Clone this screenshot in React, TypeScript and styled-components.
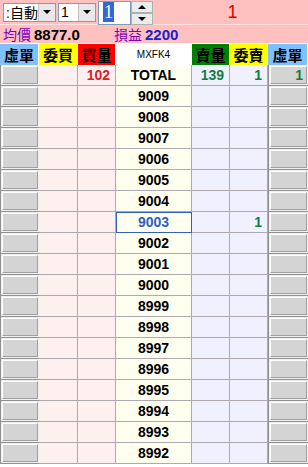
import React from 'react';
import styled, { createGlobalStyle } from 'styled-components';

const GlobalStyle = createGlobalStyle`
  html, body {
    margin: 0;
    padding: 0;
    background: #ffffff;
  }
  body {
    font-family: Arial, "Liberation Sans", "Noto Sans CJK TC", sans-serif;
  }
`;

const Page = styled.div`
  width: 308px;
  height: 467px;
  overflow: hidden;
  background: #ffffff;
`;

const TopBar = styled.div`
  display: flex;
  align-items: center;
  height: 25px;
  background: #ffc0c0;
  border-bottom: 1px solid #ffe0e0;
  box-sizing: border-box;
  padding-left: 3px;
  gap: 2px;
`;

const Combo = styled.div<{ $w: number }>`
  display: flex;
  align-items: center;
  width: ${p => p.$w}px;
  height: 19px;
  box-sizing: border-box;
  background: #ffffff;
  border: 1px solid #7f9db9;
  font-size: 14px;
  color: #000;
`;

const ComboText = styled.span`
  flex: 1;
  padding-left: 2px;
  font-family: "Liberation Sans", "Noto Sans CJK TC", sans-serif;
`;

const ComboButton = styled.div`
  width: 16px;
  height: 17px;
  background: #e8e8e8;
  border-left: 1px solid #c0c0c0;
  display: flex;
  align-items: center;
  justify-content: center;
`;

const Tri = styled.div<{ $up?: boolean }>`
  width: 0;
  height: 0;
  border-left: 4px solid transparent;
  border-right: 4px solid transparent;
  ${p => (p.$up ? 'border-bottom: 4px solid #000;' : 'border-top: 4px solid #000;')}
`;

const Spin = styled.div`
  display: flex;
  height: 24px;
  margin-top: 1px;
  align-self: flex-start;
`;

const SpinInput = styled.div`
  width: 33px;
  height: 24px;
  box-sizing: border-box;
  background: #fff;
  border: 1px solid #7f9db9;
  padding: 2px 0 0 4px;
`;

const SpinSel = styled.span`
  background: #3168d5;
  color: #fff;
  font-family: "Liberation Serif", serif;
  font-size: 18px;
  line-height: 17px;
  padding: 0 1px;
`;

const SpinButtons = styled.div`
  display: flex;
  flex-direction: column;
  width: 22px;
  height: 24px;
`;

const SpinBtn = styled.div`
  flex: 1;
  display: flex;
  align-items: center;
  justify-content: center;
  background: #ececec;
  border: 1px solid #b0b0b0;
  box-sizing: border-box;
`;

const BigNum = styled.div`
  flex: 1;
  text-align: center;
  color: #e00000;
  font-size: 18px;
  padding-left: 2px;
`;

const InfoBar = styled.div`
  display: flex;
  align-items: center;
  height: 18px;
  background: #ffc0c0;
  padding-left: 3px;
`;

const Label = styled.span`
  color: #8000c0;
  font-family: "Noto Sans CJK TC", sans-serif;
  font-size: 14px;
  margin-right: 3px;
`;

const Value = styled.span<{ $color: string; $w?: number }>`
  color: ${p => p.$color};
  font-weight: bold;
  font-size: 15px;
  width: ${p => (p.$w ? `${p.$w}px` : 'auto')};
`;

const Grid = styled.div`
  display: grid;
  grid-template-columns: 39px 39px 38px 76px 38px 38px 40px;
  grid-auto-rows: 21px;
  margin-top: 1px;
`;

const Head = styled.div<{ $bg: string; $small?: boolean }>`
  background: ${p => p.$bg};
  color: #000;
  border-right: 1px solid #ffffff;
  display: flex;
  align-items: center;
  justify-content: center;
  font-family: "Noto Sans CJK TC", sans-serif;
  font-weight: bold;
  font-size: 15px;
  ${p => p.$small && 'font-family: Arial, "Liberation Sans", sans-serif; font-weight: normal; font-size: 10px;'}
`;

const Cell = styled.div<{ $bg: string; $fg?: string }>`
  background: ${p => p.$bg};
  color: ${p => p.$fg || '#000'};
  border-right: 1px solid #b0a8b0;
  border-bottom: 1px solid #b0a8b0;
  box-sizing: border-box;
  display: flex;
  align-items: center;
  justify-content: flex-end;
  padding-right: 5px;
  font-weight: bold;
  font-size: 14px;
`;

const PriceCell = styled.div<{ $hi?: boolean }>`
  background: #fffff0;
  color: ${p => (p.$hi ? '#3060c0' : '#000')};
  border-right: 1px solid #b0a8b0;
  border-bottom: 1px solid #b0a8b0;
  ${p => p.$hi && 'outline: 1px solid #3060c0; outline-offset: -1px;'}
  box-sizing: border-box;
  display: flex;
  align-items: center;
  justify-content: center;
  font-weight: bold;
  font-size: 14px;
`;

const BtnCell = styled.div`
  background: #f0f0f0;
  border-left: 1px solid #909090;
  border-bottom: 1px solid #909090;
  box-sizing: border-box;
  padding: 1px;
  display: flex;
`;

const Btn = styled.div<{ $fg?: string }>`
  flex: 1;
  background: #d4d4d4;
  border-top: 1px solid #ffffff;
  border-left: 1px solid #ffffff;
  border-bottom: 1px solid #a0a0a0;
  border-right: 1px solid #a0a0a0;
  color: ${p => p.$fg || '#000'};
  display: flex;
  align-items: center;
  justify-content: flex-end;
  padding-right: 3px;
  font-weight: bold;
  font-size: 14px;
`;

const PINK = '#fff0f0';
const BLUE = '#f0f0ff';
const GREEN = '#108040';

const prices = Array.from({ length: 18 }, (_, i) => 9009 - i);

export default function App() {
  return (
    <Page>
      <GlobalStyle />
      <TopBar>
        <Combo $w={53}>
          <ComboText>:自動</ComboText>
          <ComboButton><Tri /></ComboButton>
        </Combo>
        <Combo $w={38}>
          <ComboText>1</ComboText>
          <ComboButton><Tri /></ComboButton>
        </Combo>
        <Spin>
          <SpinInput><SpinSel>1</SpinSel></SpinInput>
          <SpinButtons>
            <SpinBtn><Tri $up /></SpinBtn>
            <SpinBtn><Tri /></SpinBtn>
          </SpinButtons>
        </Spin>
        <BigNum>1</BigNum>
      </TopBar>
      <InfoBar>
        <Label>均價</Label>
        <Value $color="#000" $w={80}>8877.0</Value>
        <Label>損益</Label>
        <Value $color="#2020d0">2200</Value>
      </InfoBar>
      <Grid>
        <Head $bg="#80c0ff">虛單</Head>
        <Head $bg="#ffff00">委買</Head>
        <Head $bg="#ff0000">買量</Head>
        <Head $bg="#ffffff" $small>MXFK4</Head>
        <Head $bg="#008000">賣量</Head>
        <Head $bg="#ffff00">委賣</Head>
        <Head $bg="#80c0ff">虛單</Head>

        <BtnCell><Btn /></BtnCell>
        <Cell $bg={PINK} />
        <Cell $bg={PINK} $fg="#e02020">102</Cell>
        <PriceCell>TOTAL</PriceCell>
        <Cell $bg={BLUE} $fg={GREEN}>139</Cell>
        <Cell $bg={BLUE} $fg={GREEN}>1</Cell>
        <BtnCell><Btn $fg={GREEN}>1</Btn></BtnCell>

        {prices.map(p => (
          <React.Fragment key={p}>
            <BtnCell><Btn /></BtnCell>
            <Cell $bg={PINK} />
            <Cell $bg={PINK} />
            <PriceCell $hi={p === 9003}>{p}</PriceCell>
            <Cell $bg={BLUE} />
            <Cell $bg={BLUE} $fg={GREEN}>{p === 9003 ? '1' : ''}</Cell>
            <BtnCell><Btn /></BtnCell>
          </React.Fragment>
        ))}
      </Grid>
    </Page>
  );
}
